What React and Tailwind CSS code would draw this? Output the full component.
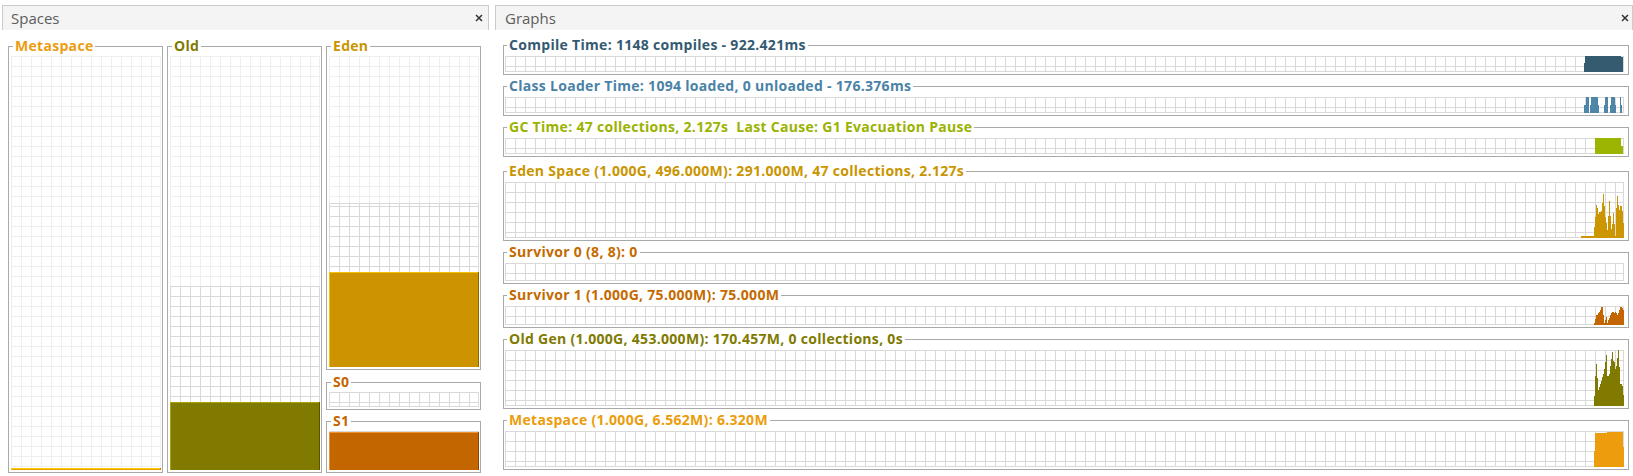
import React from "react";

const LIGHT = "#efefef";
const DARK = "#d9d9d9";

function CloseX() {
  return (
    <svg width="8" height="8" viewBox="0 0 8 8" className="block">
      <path d="M1 1L7 7M7 1L1 7" stroke="#333" strokeWidth="1.5" fill="none" />
    </svg>
  );
}

function Panel({ title, className, headClass, children }) {
  return (
    <section className={`flex flex-col ${className}`}>
      <header
        className={`flex h-[25px] shrink-0 items-center justify-between border border-b-0 border-[#cbcbcb] bg-[#f4f4f4] ${headClass}`}
      >
        <span className="text-[15px] leading-none text-[#5c5c5c]">{title}</span>
        <CloseX />
      </header>
      {children}
    </section>
  );
}

// vertical space bar: committed / used are fractions of the grid height
function SpaceChart({ id, committed, used, fill, light, dark }) {
  const cTop = `${(1 - committed) * 100}%`;
  const uTop = `${(1 - used) * 100}%`;
  return (
    <svg className="block h-full w-full" shapeRendering="crispEdges">
      <defs>
        <pattern id={`${id}-l`} width="10" height="10" patternUnits="userSpaceOnUse">
          <path d="M0 0.5H10M0.5 0V10" fill="none" stroke={LIGHT} />
        </pattern>
        <pattern id={`${id}-d`} width="10" height="10" patternUnits="userSpaceOnUse">
          <path d="M0 0.5H10M0.5 0V10" fill="none" stroke={DARK} />
        </pattern>
      </defs>
      <rect width="100%" height="100%" fill={`url(#${id}-l)`} />
      <line x1="100%" x2="100%" y1="0" y2="100%" stroke={LIGHT} transform="translate(-0.5 0)" />
      <line x1="0" x2="100%" y1="100%" y2="100%" stroke={LIGHT} transform="translate(0 -0.5)" />
      {committed > 0 && (
        <g>
          <rect y={cTop} width="100%" height={`${committed * 100}%`} fill={`url(#${id}-d)`} />
          <line x1="0" x2="100%" y1={cTop} y2={cTop} stroke={DARK} transform="translate(0 0.5)" />
          <line x1="100%" x2="100%" y1={cTop} y2="100%" stroke={DARK} transform="translate(-0.5 0)" />
          <line x1="0" x2="100%" y1="100%" y2="100%" stroke={DARK} transform="translate(0 -0.5)" />
        </g>
      )}
      {used > 0 && (
        <g>
          <rect y={uTop} width="100%" height={`${used * 100}%`} fill={fill} />
          <line x1="0" x2="100%" y1={uTop} y2={uTop} stroke={light} transform="translate(0 0.5)" />
          <line x1="0.5" x2="0.5" y1={uTop} y2="100%" stroke={light} />
          <line x1="100%" x2="100%" y1={uTop} y2="100%" stroke={dark} transform="translate(-0.5 0)" />
        </g>
      )}
    </svg>
  );
}

function SpaceBox({ id, title, color, className, gridClass, ...chart }) {
  return (
    <fieldset className={`flex min-h-0 flex-col border border-[#a9a9a9] ${className}`}>
      <legend className={`ml-[4px] px-[2px] text-[14px] font-bold leading-[14px] tracking-[0.3px] ${color}`}>
        {title}
      </legend>
      <div className={`min-h-0 pb-[2px] pl-[2px] pr-[1px] pt-[3px] ${gridClass}`}>
        <SpaceChart id={id} {...chart} />
      </div>
    </fieldset>
  );
}

const graphs = [
  {
    id: "cmp",
    title: "Compile Time: 1148 compiles - 922.421ms",
    color: "text-[#345a71]",
    fill: "#355b70",
    h: 16,
    hClass: "h-[16px]",
    mt: "",
    blocks: [[5, 6, 7], [6, 42, 0], [42, 44, 1]],
  },
  {
    id: "cls",
    title: "Class Loader Time: 1094 loaded, 0 unloaded - 176.376ms",
    color: "text-[#4a82a6]",
    fill: "#4f86a8",
    h: 16,
    hClass: "h-[16px]",
    mt: "mt-[4px]",
    blocks: [
      [5, 7, 8], [7, 10, 0], [11, 12, 8], [12, 19, 0], [19, 20, 8], [25, 26, 8],
      [26, 29, 0], [31, 32, 8], [32, 36, 0], [36, 37, 8], [41, 42, 0], [42, 43, 8],
    ],
  },
  {
    id: "gc",
    title: "GC Time: 47 collections, 2.127s  Last Cause: G1 Evacuation Pause",
    color: "text-[#9ab300]",
    fill: "#9bb500",
    h: 16,
    hClass: "h-[16px]",
    mt: "mt-[4px]",
    blocks: [[16, 42, 0], [42, 44, 8]],
  },
  {
    id: "eden",
    title: "Eden Space (1.000G, 496.000M): 291.000M, 47 collections, 2.127s",
    color: "text-[#c99500]",
    fill: "#cc9600",
    h: 56,
    hClass: "h-[56px]",
    mt: "mt-[7px]",
    blocks: [[2, 15, 54]],
    tops: [45, 35, 23, 26, 32, 30, 30, 29, 21, 12, 24, 35, 41, 48, 34, 19, 34, 47, 42, 31, 42, 54, 26, 14, 23, 28, 24, 24, 29, 41],
  },
  {
    id: "s0",
    title: "Survivor 0 (8, 8): 0",
    color: "text-[#c46a00]",
    fill: "#c46600",
    h: 18,
    hClass: "h-[18px]",
    mt: "mt-[4px]",
  },
  {
    id: "s1",
    title: "Survivor 1 (1.000G, 75.000M): 75.000M",
    color: "text-[#c46a00]",
    fill: "#c46600",
    h: 19,
    hClass: "h-[19px]",
    mt: "mt-[4px]",
    tops: [17, 13, 9, 9, 7, 6, 4, 1, 1, 9, 17, 14, 11, 17, 14, 12, 9, 7, 6, 6, 7, 6, 7, 9, 7, 4, 1, 1, 2, 4],
  },
  {
    id: "old",
    title: "Old Gen (1.000G, 453.000M): 170.457M, 0 collections, 0s",
    color: "text-[#807a00]",
    fill: "#807a00",
    h: 56,
    hClass: "h-[56px]",
    mt: "mt-[4px]",
    tops: [46, 26, 14, 28, 40, 37, 34, 31, 27, 24, 19, 12, 5, 26, 26, 24, 16, 9, 2, 11, 12, 19, 16, 8, 0, 17, 34, 34, 36, 45],
  },
  {
    id: "meta",
    title: "Metaspace (1.000G, 6.562M): 6.320M",
    color: "text-[#eb9c0c]",
    fill: "#ec9c0c",
    h: 36,
    hClass: "h-[36px]",
    mt: "mt-[4px]",
    blocks: [[15, 16, 20], [16, 28, 2], [28, 44, 1], [44, 45, 16]],
  },
];

function Graph({ id, title, color, fill, h, hClass, mt, blocks = [], tops = [] }) {
  return (
    <fieldset className={`min-w-0 border border-[#a9a9a9] ${mt}`}>
      <legend
        className={`ml-[3px] whitespace-pre px-[2px] text-[14px] font-bold leading-[14px] tracking-[0.3px] ${color}`}
      >
        {title}
      </legend>
      <div className="pb-[2px] pl-[1px] pr-[4px] pt-[4px]">
        <div className={`relative ${hClass}`}>
          <svg className="block h-full w-full" shapeRendering="crispEdges">
            <defs>
              <pattern id={`${id}-g`} width="10" height="10" patternUnits="userSpaceOnUse">
                <path d="M0 0.5H10M0.5 0V10" fill="none" stroke={DARK} />
              </pattern>
            </defs>
            <rect width="100%" height="100%" fill={`url(#${id}-g)`} />
            <line x1="100%" x2="100%" y1="0" y2="100%" stroke={DARK} transform="translate(-0.5 0)" />
            <line x1="0" x2="100%" y1="100%" y2="100%" stroke={DARK} transform="translate(0 -0.5)" />
          </svg>
          {(blocks.length > 0 || tops.length > 0) && (
            <svg className="absolute right-0 top-0" width="45" height={h} shapeRendering="crispEdges">
              {blocks.map(([x1, x2, t], i) => (
                <rect key={`b${i}`} x={x1} y={t} width={x2 - x1} height={h - t} fill={fill} />
              ))}
              {tops.map((t, i) => (
                <rect key={`t${i}`} x={15 + i} y={t} width="1" height={h - t} fill={fill} />
              ))}
            </svg>
          )}
        </div>
      </div>
    </fieldset>
  );
}

export default function App() {
  return (
    <div className="flex h-[476px] w-[1633px] gap-[6px] overflow-hidden bg-white pt-[5px] font-['Open_Sans','DejaVu_Sans',sans-serif]">
      <Panel title="Spaces" className="ml-[2px] w-[487px] shrink-0" headClass="pl-[8px] pr-[5px]">
        <div className="flex min-h-0 flex-1 gap-[4px] pb-[3px] pl-[6px] pr-[8px] pt-[9px]">
          <SpaceBox
            id="sp-meta"
            title="Metaspace"
            color="text-[#eb9c10]"
            className="w-[155px]"
            gridClass="flex-1"
            committed={0.006}
            used={0.006}
            fill="#eb9c00"
            light="#ffcc00"
            dark="#c88000"
          />
          <SpaceBox
            id="sp-old"
            title="Old"
            color="text-[#7f7a00]"
            className="w-[155px]"
            gridClass="flex-1"
            committed={0.444}
            used={0.164}
            fill="#807a00"
            light="#aaa400"
            dark="#5a5600"
          />
          <div className="flex w-[155px] flex-col gap-[4px]">
            <SpaceBox
              id="sp-eden"
              title="Eden"
              color="text-[#c99500]"
              className="flex-1"
              gridClass="flex-1"
              committed={0.526}
              used={0.306}
              fill="#cc9400"
              light="#f4c400"
              dark="#8c6600"
            />
            <SpaceBox
              id="sp-s0"
              title="S0"
              color="text-[#c46600]"
              className="mt-[1px]"
              gridClass="h-[20px]"
              committed={1}
              used={0}
            />
            <SpaceBox
              id="sp-s1"
              title="S1"
              color="text-[#c46600]"
              gridClass="h-[44px]"
              committed={1}
              used={0.974}
              fill="#c46600"
              light="#f29030"
              dark="#8a4600"
            />
          </div>
        </div>
      </Panel>
      <Panel title="Graphs" className="min-w-0 flex-1" headClass="pl-[9px] pr-[3px]">
        <div className="flex flex-1 flex-col pl-[8px] pr-[4px] pt-[8px]">
          {graphs.map((g) => (
            <Graph key={g.id} {...g} />
          ))}
        </div>
      </Panel>
    </div>
  );
}
